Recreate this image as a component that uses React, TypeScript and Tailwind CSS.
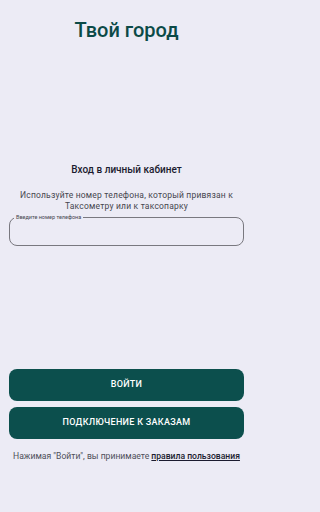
export default function App() {
  return (
    <div className="min-h-screen bg-[#ecebf5]">
      <div
        className="flex h-[512px] w-[253px] flex-col px-[9px]"
        style={{ fontFamily: 'Roboto, "Noto Sans", sans-serif' }}
      >
        <h1 className="pt-[18px] text-center text-[20px] leading-6 font-medium text-[#0b4a47]">
          Твой город
        </h1>

        <div className="mt-[121px] text-center text-[10px] leading-[14px] font-medium text-[#1b1b2f]">
          Вход в личный кабинет
        </div>
        <p className="mt-[13px] px-2 text-center text-[8.5px] leading-[11px] tracking-[0.2px] text-[#46464f]">
          Используйте номер телефона, который привязан к Таксометру или к таксопарку
        </p>

        <fieldset className="mt-[2px] h-[32px] rounded-[8px] border border-[#79787f] px-[4px]">
          <legend className="px-[2px] text-[5.5px] leading-[6px] text-[#46464f]">
            Введите номер телефона
          </legend>
        </fieldset>

        <div className="flex-1" />

        <button className="h-[32px] w-full rounded-[8px] bg-[#0c4f4d] text-[9px] font-medium tracking-[0.3px] text-white">
          ВОЙТИ
        </button>
        <button className="mt-[6px] h-[32px] w-full rounded-[8px] bg-[#0c4f4d] text-[9px] font-medium tracking-[0.3px] text-white">
          ПОДКЛЮЧЕНИЕ К ЗАКАЗАМ
        </button>

        <p className="mt-[12px] mb-[50px] text-center text-[8.6px] leading-[11px] text-[#4f4f59]">
          Нажимая "Войти", вы принимаете{' '}
          <span className="font-medium text-[#1b1b2f] underline">правила пользования</span>
        </p>
      </div>
    </div>
  );
}
